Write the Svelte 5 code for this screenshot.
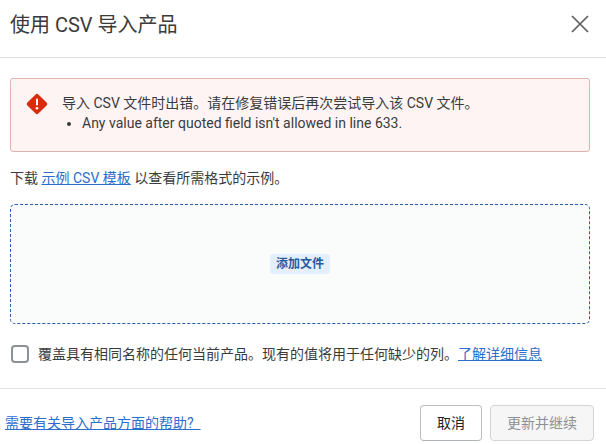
<script>
    let overwrite = $state(false);
</script>

<div class="modal">
    <header class="head">
        <h2>使用 CSV 导入产品</h2>
        <button class="close" type="button" aria-label="关闭">
            <svg width="18" height="18" viewBox="0 0 18 18">
                <path d="M1 1L17 17M17 1L1 17" stroke="#5c5f62" stroke-width="1.7" fill="none" />
            </svg>
        </button>
    </header>

    <main class="body">
        <div class="banner">
            <svg class="alert" width="22" height="22" viewBox="0 0 22 22">
                <path d="M11 .8c.5 0 1 .2 1.400.6l8.200 8.200c.8.8.8 2 0 2.800l-8.200 8.200c-.8.8-2 .8-2.800 0l-8.200-8.200c-.8-.8-.8-2 0-2.800l8.200-8.200c.4-.4.9-.6 1.400-.6z" fill="#d82c0d" />
                <rect x="10" y="5.500" width="2" height="7" rx="1" fill="#fff" />
                <circle cx="11" cy="15.300" r="1.300" fill="#fff" />
            </svg>
            <div class="banner-text">
                <p>导入 CSV 文件时出错。请在修复错误后再次尝试导入该 CSV 文件。</p>
                <ul>
                    <li>Any value after quoted field isn't allowed in line 633.</li>
                </ul>
            </div>
        </div>

        <p class="hint">下载 <a href="#top">示例 CSV 模板</a> 以查看所需格式的示例。</p>

        <div class="drop">
            <span class="add">添加文件</span>
        </div>

        <label class="check">
            <input type="checkbox" bind:checked={overwrite} />
            <span>覆盖具有相同名称的任何当前产品。现有的值将用于任何缺少的列。<a href="#top">了解详细信息</a></span>
        </label>
    </main>

    <footer class="foot">
        <a href="#top">需要有关导入产品方面的帮助?&nbsp;&nbsp;</a>
        <div class="actions">
            <button class="cancel" type="button">取消</button>
            <button class="next" type="button" disabled>更新并继续</button>
        </div>
    </footer>
</div>

<style>
    :global(body) {
        background: #fff;
    }
    .modal {
        width: 606px;
        height: 444px;
        overflow: hidden;
        color: #3a3b3c;
        font-family: Roboto, "Noto Sans CJK SC", sans-serif;
        font-size: 14px;
        line-height: 20px;
    }
    a {
        color: #2c6ecb;
        text-decoration: underline;
    }
    .head {
        height: 57px;
        border-bottom: 1px solid #e1e3e5;
        display: flex;
        align-items: center;
        justify-content: space-between;
        padding: 0 17px 0 10px;
    }
    h2 {
        margin: 0;
        font-size: 20px;
        font-weight: 400;
        line-height: 50px;
        padding-bottom: 8px;
    }
    .close {
        padding: 0;
        border: 0;
        background: none;
        display: flex;
        margin-bottom: 9px;
    }
    .body {
        padding: 20px 16px 0 10px;
    }
    .banner {
        height: 74px;
        box-sizing: border-box;
        border: 1px solid #e0b3b2;
        border-radius: 3px;
        background: #fff4f4;
        display: flex;
        gap: 14px;
        padding: 14px 15px;
    }
    .alert {
        flex: none;
    }
    .banner-text p {
        margin: 0;
    }
    .banner-text ul {
        margin: 0;
        padding-left: 20px;
    }
    .hint {
        margin: 16px 0 16px;
    }
    .drop {
        height: 120px;
        box-sizing: border-box;
        border: 1px dashed #2a5ba8;
        border-radius: 5px;
        background: #fafbfb;
        display: flex;
        align-items: center;
        justify-content: center;
    }
    .add {
        padding: 0 6px;
        border-radius: 3px;
        background: #e4effd;
        color: #2a5a9e;
        font-size: 12px;
        font-weight: 700;
    }
    .check {
        margin-top: 20px;
        display: flex;
        align-items: center;
        gap: 9px;
    }
    .check input {
        appearance: none;
        margin: 0 0 0 1px;
        width: 18px;
        height: 18px;
        border: 2px solid #8c9196;
        border-radius: 4px;
        background: #fff;
    }
    .foot {
        margin-top: 24px;
        border-top: 1px solid #e1e3e5;
        display: flex;
        align-items: center;
        justify-content: space-between;
        padding: 16px 12px 0 5px;
    }
    .actions {
        display: flex;
        gap: 8px;
    }
    .actions button {
        height: 36px;
        border-radius: 4px;
        font: inherit;
        padding: 0;
    }
    .cancel {
        width: 62px;
        background: #fff;
        border: 1px solid #babfc3;
        border-bottom-color: #aeb4b9;
        color: #202223;
    }
    .next {
        width: 104px;
        background: #f6f6f7;
        border: 1px solid #d2d5d8;
        color: #8c9196;
    }
</style>
